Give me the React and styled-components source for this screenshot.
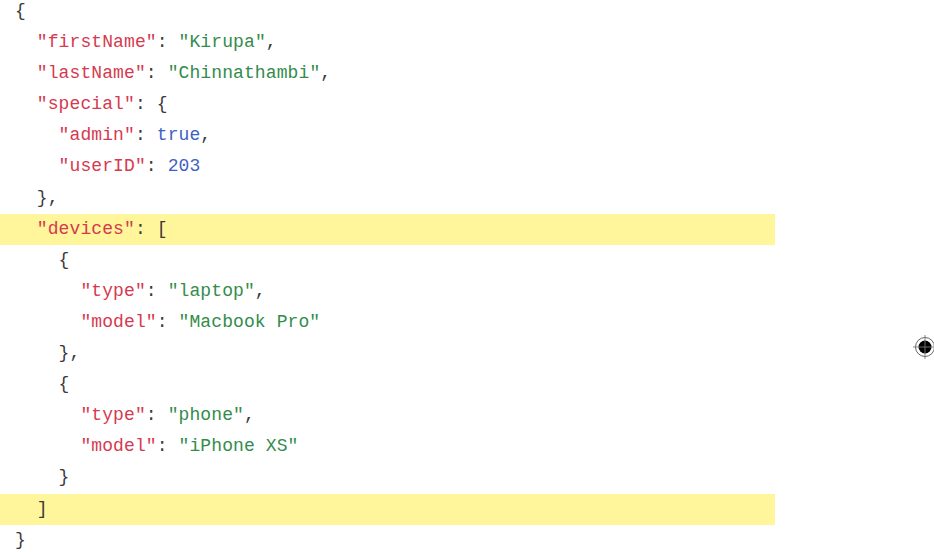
import React from 'react';
import styled, { createGlobalStyle } from 'styled-components';

const Global = createGlobalStyle`
  html, body {
    margin: 0;
    padding: 0;
    background: #fff;
    overflow: hidden;
  }
`;

const Page = styled.div`
  position: relative;
  width: 934px;
  height: 552px;
  overflow: hidden;
`;

const Code = styled.pre`
  margin: -4px 0 0 0;
  width: 775px;
  font-family: "Liberation Mono", "Courier New", monospace;
  font-size: 18px;
  letter-spacing: 0.1px;
  color: #3a3a3a;
`;

const Line = styled.div`
  height: 31.1px;
  line-height: 31.1px;
  padding-left: ${p => 15 + p.$level * 21.8}px;
  background: ${p => (p.$hl ? '#fff59a' : 'transparent')};
  white-space: pre;
`;

const Key = styled.span`
  color: #d53a50;
`;

const Str = styled.span`
  color: #348c4c;
`;

const Lit = styled.span`
  color: #3f62c2;
`;

const Target = styled.svg`
  position: absolute;
  left: 912px;
  top: 334px;
`;

const k = s => <Key>"{s}"</Key>;
const s = v => <Str>"{v}"</Str>;

const lines = [
  [0, <>{'{'}</>],
  [1, <>{k('firstName')}: {s('Kirupa')},</>],
  [1, <>{k('lastName')}: {s('Chinnathambi')},</>],
  [1, <>{k('special')}: {'{'}</>],
  [2, <>{k('admin')}: <Lit>true</Lit>,</>],
  [2, <>{k('userID')}: <Lit>203</Lit></>],
  [1, <>{'},'}</>],
  [1, <>{k('devices')}: [</>, true],
  [2, <>{'{'}</>],
  [3, <>{k('type')}: {s('laptop')},</>],
  [3, <>{k('model')}: {s('Macbook Pro')}</>],
  [2, <>{'},'}</>],
  [2, <>{'{'}</>],
  [3, <>{k('type')}: {s('phone')},</>],
  [3, <>{k('model')}: {s('iPhone XS')}</>],
  [2, <>{'}'}</>],
  [1, <>]</>, true],
  [0, <>{'}'}</>],
];

export default function App() {
  return (
    <Page>
      <Global />
      <Code>
        {lines.map(([level, content, hl], i) => (
          <Line key={i} $level={level} $hl={hl}>{content}</Line>
        ))}
      </Code>
      <Target width="26" height="26" viewBox="0 0 26 26">
        <circle cx="13" cy="13" r="9.5" fill="none" stroke="#555" strokeWidth="0.9" />
        <circle cx="13" cy="13" r="6.5" fill="#000" />
        <line x1="13" y1="1" x2="13" y2="25" stroke="#777" strokeWidth="0.9" />
        <line x1="1" y1="13" x2="25" y2="13" stroke="#777" strokeWidth="0.9" />
      </Target>
    </Page>
  );
}
